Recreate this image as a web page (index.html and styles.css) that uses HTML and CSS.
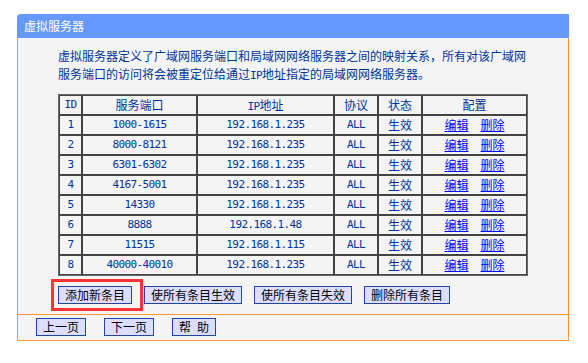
FILE: index.html
```html
<!DOCTYPE html>
<html lang="zh-CN">
<head>
<meta charset="utf-8">
<title>虚拟服务器</title>
<link rel="stylesheet" href="styles.css">
</head>
<body>
<div class="wrap">
  <div class="titlebar">虚拟服务器</div>
  <div class="panel">
    <div class="main">
      <p class="desc">虚拟服务器定义了广域网服务端口和局域网网络服务器之间的映射关系，所有对该广域网<br>服务端口的访问将会被重定位给通过<span class="num">IP</span>地址指定的局域网网络服务器。</p>
      <table class="grid">
        <thead>
          <tr>
            <th class="c-id num">ID</th>
            <th class="c-port">服务端口</th>
            <th class="c-ip"><span class="num">IP</span>地址</th>
            <th class="c-proto">协议</th>
            <th class="c-state">状态</th>
            <th class="c-conf">配置</th>
          </tr>
        </thead>
        <tbody>
          <tr><td class="num">1</td><td class="num">1000-1615</td><td class="num">192.168.1.235</td><td class="num">ALL</td><td>生效</td><td><a href="#">编辑</a><a href="#">删除</a></td></tr>
          <tr><td class="num">2</td><td class="num">8000-8121</td><td class="num">192.168.1.235</td><td class="num">ALL</td><td>生效</td><td><a href="#">编辑</a><a href="#">删除</a></td></tr>
          <tr><td class="num">3</td><td class="num">6301-6302</td><td class="num">192.168.1.235</td><td class="num">ALL</td><td>生效</td><td><a href="#">编辑</a><a href="#">删除</a></td></tr>
          <tr><td class="num">4</td><td class="num">4167-5001</td><td class="num">192.168.1.235</td><td class="num">ALL</td><td>生效</td><td><a href="#">编辑</a><a href="#">删除</a></td></tr>
          <tr><td class="num">5</td><td class="num">14330</td><td class="num">192.168.1.235</td><td class="num">ALL</td><td>生效</td><td><a href="#">编辑</a><a href="#">删除</a></td></tr>
          <tr><td class="num">6</td><td class="num">8888</td><td class="num">192.168.1.48</td><td class="num">ALL</td><td>生效</td><td><a href="#">编辑</a><a href="#">删除</a></td></tr>
          <tr><td class="num">7</td><td class="num">11515</td><td class="num">192.168.1.115</td><td class="num">ALL</td><td>生效</td><td><a href="#">编辑</a><a href="#">删除</a></td></tr>
          <tr><td class="num">8</td><td class="num">40000-40010</td><td class="num">192.168.1.235</td><td class="num">ALL</td><td>生效</td><td><a href="#">编辑</a><a href="#">删除</a></td></tr>
        </tbody>
      </table>
      <div class="actions">
        <span class="mark-wrap"><button class="btn">添加新条目</button><span class="mark"></span></span>
        <button class="btn">使所有条目生效</button>
        <button class="btn">使所有条目失效</button>
        <button class="btn">删除所有条目</button>
      </div>
    </div>
    <div class="footer">
      <button class="btn">上一页</button>
      <button class="btn">下一页</button>
      <button class="btn btn-help">帮&ensp;助</button>
    </div>
  </div>
</div>
</body>
</html>
```
FILE: styles.css
```css
* { box-sizing: border-box; }
html, body { margin: 0; padding: 0; background: #ffffff; }
body {
  font-family: "Noto Sans CJK SC", "Noto Sans", sans-serif;
  font-size: 12px;
}
.wrap {
  margin: 14px 0 0 17px;
  width: 552px;
}
.titlebar {
  height: 24px;
  line-height: 24px;
  background: #6699ff;
  color: #ffffff;
  padding-left: 7px;
  border-top-left-radius: 4px;
  font-size: 12px;
}
.panel {
  background: #f4f4f4;
  border-left: 1px solid #ff9933;
  border-right: 1px solid #ff9933;
  border-bottom: 1px solid #ff9933;
}
.main {
  padding: 9px 40px 10px 40px;
}
.desc {
  margin: 0 0 11px 0;
  height: 36px;
  line-height: 18px;
  color: #003399;
  white-space: nowrap;
  overflow: hidden;
}
.num {
  font-family: "DejaVu Sans Mono", monospace;
  font-size: 11px;
  letter-spacing: -0.6px;
}
.desc .num, .grid th .num {
  line-height: 12px;
}
.grid {
  width: 470px;
  table-layout: fixed;
  border-collapse: separate;
  border-spacing: 0;
  border: 1px solid #666666;
  color: #003399;
}
.grid th, .grid td {
  border: 1px solid #444444;
  padding: 0;
  height: 20px;
  line-height: 18px;
  text-align: center;
  font-weight: normal;
  white-space: nowrap;
  overflow: hidden;
}
.grid tr { height: 20px; }
.grid th { font-size: 12px; }
.grid th.num { font-size: 11px; }
.c-id { width: 23px; }
.c-port { width: 115px; }
.c-ip { width: 137px; }
.c-proto { width: 44px; }
.c-state { width: 44px; }
.grid a {
  color: #0000ff;
  text-decoration: underline;
}
.grid a + a { margin-left: 12px; }
.actions {
  margin-top: 10px;
  height: 18px;
  display: flex;
  gap: 12px;
  align-items: center;
}
.mark-wrap {
  position: relative;
  display: inline-flex;
}
.mark {
  position: absolute;
  left: -7px;
  top: -7px;
  width: 92px;
  height: 32px;
  border: 3px solid #ff3333;
  pointer-events: none;
}
.btn {
  margin: 0;
  height: 18px;
  padding: 0 6px;
  line-height: 16px;
  font-family: "Noto Sans CJK SC", "Noto Sans", sans-serif;
  font-size: 12px;
  color: #000000;
  background: #dddeff;
  border: 1px solid #2244aa;
  border-radius: 0;
}
.footer {
  border-top: 1px solid #ff9933;
  padding: 3px 0 4px 18px;
  height: 26px;
  display: flex;
  gap: 18px;
}
```
